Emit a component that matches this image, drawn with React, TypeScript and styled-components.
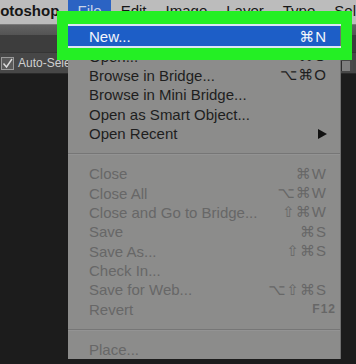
import React from 'react';
import styled, { createGlobalStyle } from 'styled-components';

// Photoshop "File" menu, dimmed screenshot with a green annotation box on "New..."

type MenuEntry =
  | { kind: 'item'; label: string; shortcut?: string; disabled?: boolean; submenu?: boolean; fnKey?: boolean; active?: boolean }
  | { kind: 'sep' };

const menuBarItems = ['Edit', 'Image', 'Layer', 'Type', 'Select'];

const fileMenu: MenuEntry[] = [
  { kind: 'item', label: 'New...', shortcut: '⌘N', active: true },
  { kind: 'item', label: 'Open...', shortcut: '⌘O' },
  { kind: 'item', label: 'Browse in Bridge...', shortcut: '⌥⌘O' },
  { kind: 'item', label: 'Browse in Mini Bridge...' },
  { kind: 'item', label: 'Open as Smart Object...' },
  { kind: 'item', label: 'Open Recent', submenu: true },
  { kind: 'sep' },
  { kind: 'item', label: 'Close', shortcut: '⌘W', disabled: true },
  { kind: 'item', label: 'Close All', shortcut: '⌥⌘W', disabled: true },
  { kind: 'item', label: 'Close and Go to Bridge...', shortcut: '⇧⌘W', disabled: true },
  { kind: 'item', label: 'Save', shortcut: '⌘S', disabled: true },
  { kind: 'item', label: 'Save As...', shortcut: '⇧⌘S', disabled: true },
  { kind: 'item', label: 'Check In...', disabled: true },
  { kind: 'item', label: 'Save for Web...', shortcut: '⌥⇧⌘S', disabled: true },
  { kind: 'item', label: 'Revert', shortcut: 'F12', disabled: true, fnKey: true },
  { kind: 'sep' },
  { kind: 'item', label: 'Place...', disabled: true },
];

const GlobalStyle = createGlobalStyle`
  html, body {
    margin: 0;
    padding: 0;
    background: #1c1c1c;
    overflow: hidden;
  }
  body {
    font-family: 'Liberation Sans', Arial, sans-serif;
  }
`;

const Screen = styled.div`
  position: relative;
  width: 356px;
  height: 364px;
  overflow: hidden;
  display: flex;
  flex-direction: column;
  background: #1c1c1c;
`;

const MenuBar = styled.div`
  height: 24px;
  flex-shrink: 0;
  display: flex;
  align-items: stretch;
  background: #bcbcbc;
  font-size: 15px;
  line-height: 18px;
  color: #161616;
  white-space: nowrap;
  overflow: hidden;
`;

const AppName = styled.div`
  flex-shrink: 0;
  margin-left: -19px;
  padding-top: 2px;
  font-weight: 700;
  width: 87px;
`;

const MenuTitle = styled.div<{ $open?: boolean }>`
  flex-shrink: 0;
  padding: 2px 9.5px 0;
  background: ${({ $open }) => ($open ? '#2b63c3' : 'transparent')};
  color: ${({ $open }) => ($open ? '#c9d3e8' : '#161616')};
`;

const TitleStrip = styled.div`
  height: 10px;
  flex-shrink: 0;
  background: linear-gradient(#626262, #545454);
  border-top: 1px solid #7a7a7a;
`;

const Toolbar = styled.div`
  height: 17px;
  flex-shrink: 0;
  background: #3d3d3d;
`;

const OptionsBar = styled.div`
  height: 20px;
  flex-shrink: 0;
  display: flex;
  align-items: center;
  gap: 4px;
  padding-left: 1px;
  background: #474747;
  border-top: 1px solid #353535;
  border-bottom: 1px solid #2a2a2a;
  font-size: 12px;
  color: #cfcfcf;
  white-space: nowrap;
`;

const CheckBox = styled.span`
  flex-shrink: 0;
  width: 11px;
  height: 11px;
  border: 1px solid #9a9a9a;
  background: #5a5a5a;
  display: flex;
  align-items: center;
  justify-content: center;
`;

const PanelIcon = styled.span`
  flex-shrink: 0;
  margin-left: auto;
  margin-right: 3px;
  margin-top: 6px;
  width: 11px;
  height: 10px;
  background: #7f7f7f;
  border-left: 2px solid #2d2d2d;
  box-shadow: inset -3px 0 0 #4a4a4a;
`;

const Workspace = styled.div`
  flex: 1;
  background: #1c1c1c;
`;

const Dropdown = styled.div`
  position: absolute;
  left: 68px;
  top: 22px;
  width: 272px;
  padding-top: 5px;
  background: #8c8c8b;
  box-shadow: 1px 0 0 #6f6f6f;
`;

const Row = styled.div<{ $disabled?: boolean; $active?: boolean }>`
  height: 19.4px;
  display: flex;
  align-items: center;
  justify-content: space-between;
  padding: 0 13px 0 21px;
  font-size: 15px;
  white-space: nowrap;
  color: ${({ $disabled, $active }) => ($active ? '#f4f6fb' : $disabled ? '#676767' : '#1e1e1e')};
  background: ${({ $active }) => ($active ? '#1d5ec7' : 'transparent')};
  box-shadow: ${({ $active }) => ($active ? '0 -1px 0 #1d5ec7' : 'none')};
`;

const Shortcut = styled.span<{ $fn?: boolean }>`
  font-family: 'Liberation Sans', 'DejaVu Sans', sans-serif;
  font-size: ${({ $fn }) => ($fn ? '12px' : '15px')};
  font-weight: ${({ $fn }) => ($fn ? 700 : 400)};
  letter-spacing: 1px;
  margin-right: ${({ $fn }) => ($fn ? '-9px' : '0')};
`;

const Separator = styled.div`
  height: 20.6px;
  display: flex;
  align-items: center;

  &::after {
    content: '';
    flex: 1;
    height: 1px;
    background: #767676;
    box-shadow: 0 1px 0 #939393;
  }
`;

const Annotation = styled.div`
  position: absolute;
  left: 57px;
  top: 11px;
  width: 295px;
  height: 49px;
  box-sizing: border-box;
  border: 11px solid #24ef24;
  border-top-width: 13px;
  border-bottom-width: 12px;
  box-shadow: inset 0 2px 0 #dbe5f4, inset 0 -2px 0 #dbe5f4;
`;

const SubmenuArrow = () => (
  <svg width="9" height="10" viewBox="0 0 9 10">
    <path d="M0 0 L9 5 L0 10 Z" fill="#111" />
  </svg>
);

const CheckMark = () => (
  <svg width="11" height="11" viewBox="0 0 11 11">
    <path d="M1.5 5.5 L4.5 9 L10 1" stroke="#dcdcdc" strokeWidth="1.4" fill="none" />
  </svg>
);

export default function App() {
  return (
    <>
      <GlobalStyle />
      <Screen>
        <MenuBar>
          <AppName>Photoshop</AppName>
          <MenuTitle $open>File</MenuTitle>
          {menuBarItems.map((m) => (
            <MenuTitle key={m}>{m}</MenuTitle>
          ))}
        </MenuBar>
        <TitleStrip />
        <Toolbar />
        <OptionsBar>
          <CheckBox>
            <CheckMark />
          </CheckBox>
          <span>Auto-Select</span>
          <PanelIcon />
        </OptionsBar>
        <Workspace />

        <Dropdown>
          {fileMenu.map((entry, i) =>
            entry.kind === 'sep' ? (
              <Separator key={i} />
            ) : (
              <Row key={i} $disabled={entry.disabled} $active={entry.active}>
                <span>{entry.label}</span>
                {entry.shortcut && <Shortcut $fn={entry.fnKey}>{entry.shortcut}</Shortcut>}
                {entry.submenu && <SubmenuArrow />}
              </Row>
            )
          )}
        </Dropdown>

        <Annotation />
      </Screen>
    </>
  );
}
